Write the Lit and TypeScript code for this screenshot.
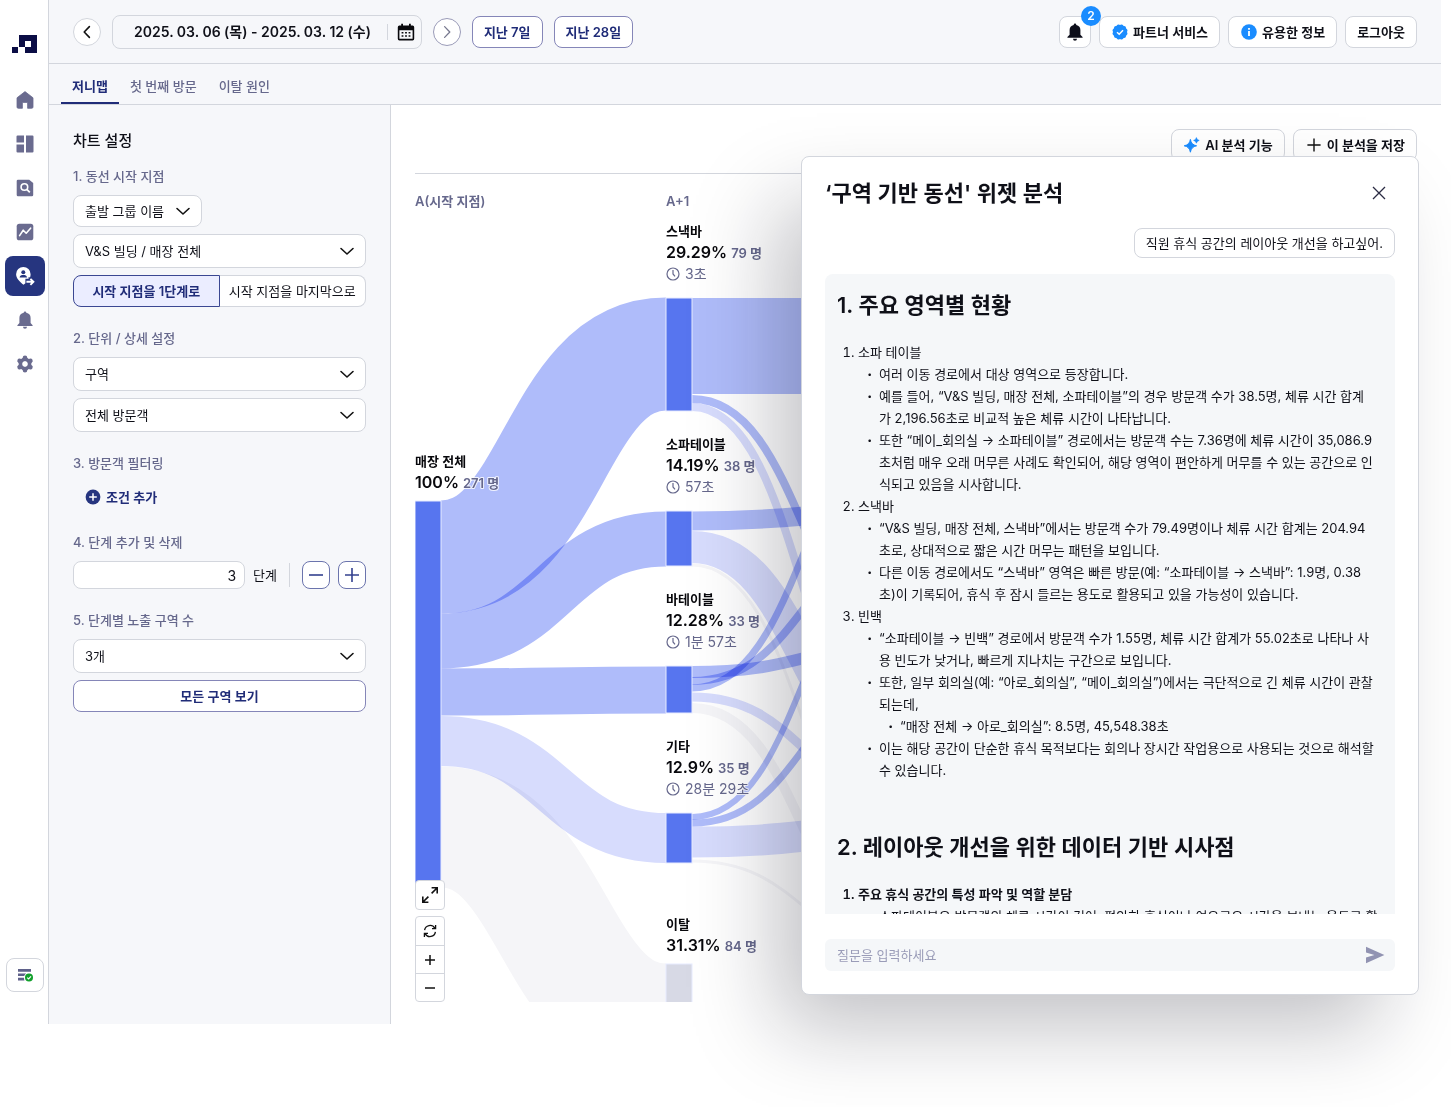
import { LitElement, html, svg, css } from "lit";
import { customElement, state } from "lit/decorators.js";
import { classMap } from "lit/directives/class-map.js";

interface FlowNode {
  name: string;
  share: string;
  count: string;
  time?: string;
  x: number;
  y: number;
  height: number;
  exit?: boolean;
}

interface FlowLink {
  from: number;
  start: number;
  end: number;
  width: number;
  tone: "strong" | "soft" | "exit";
}

const NODE_WIDTH = 26;
const COLUMNS = [415, 666, 917];

const NODES: FlowNode[] = [
  { name: "매장 전체", share: "100%", count: "271 명", x: 415, y: 501, height: 387 },
  { name: "스낵바", share: "29.29%", count: "79 명", time: "3초", x: 666, y: 298, height: 113 },
  { name: "소파테이블", share: "14.19%", count: "38 명", time: "57초", x: 666, y: 511, height: 55 },
  { name: "바테이블", share: "12.28%", count: "33 명", time: "1분 57초", x: 666, y: 666, height: 47 },
  { name: "기타", share: "12.9%", count: "35 명", time: "28분 29초", x: 666, y: 813, height: 50 },
  { name: "이탈", share: "31.31%", count: "84 명", x: 666, y: 964, height: 121, exit: true },
];

/* start and end are the vertical centres of the ribbon at both columns */
const LINKS: FlowLink[] = [
  { from: 0, start: 827, end: 1024, width: 121, tone: "exit" },
  { from: 0, start: 557, end: 354, width: 113, tone: "strong" },
  { from: 0, start: 641, end: 539, width: 55, tone: "strong" },
  { from: 0, start: 692, end: 690, width: 47, tone: "strong" },
  { from: 0, start: 741, end: 838, width: 50, tone: "soft" },
  { from: 1, start: 346, end: 346, width: 96, tone: "strong" },
  { from: 1, start: 399, end: 657, width: 8, tone: "strong" },
  { from: 1, start: 407, end: 775, width: 8, tone: "soft" },
  { from: 1, start: 521, end: 511, width: 19, tone: "strong" },
  { from: 1, start: 547, end: 767, width: 32, tone: "soft" },
  { from: 1, start: 565, end: 885, width: 3, tone: "exit" },
  { from: 1, start: 672, end: 644, width: 12, tone: "strong" },
  { from: 1, start: 681, end: 535, width: 8, tone: "strong" },
  { from: 1, start: 688, end: 415, width: 7, tone: "strong" },
  { from: 1, start: 697, end: 801, width: 9, tone: "soft" },
  { from: 1, start: 708, end: 952, width: 10, tone: "exit" },
  { from: 1, start: 817, end: 542, width: 6, tone: "strong" },
  { from: 1, start: 823, end: 672, width: 7, tone: "strong" },
  { from: 1, start: 842, end: 830, width: 31, tone: "soft" },
  { from: 1, start: 861, end: 953, width: 3, tone: "exit" },
];

const chevron = html`<svg class="chev" width="16" height="16" viewBox="0 0 16 16" aria-hidden="true">
  <path d="M2 5.5 L8 11 L14 5.5" fill="none" stroke="#111" stroke-width="1.6" stroke-linecap="round" stroke-linejoin="round" />
</svg>`;

const tokens = css`
  :host {
    --ink: #0f1018;
    --muted: #66688c;
    --navy: #202c78;
    --line: #d3d6dd;
    --pale: #f6f7fa;
    --blue: #1a8cff;
    display: block;
    box-sizing: border-box;
    font-family: Inter, "Noto Sans CJK KR", sans-serif;
    font-size: 13px;
    line-height: 20px;
    color: var(--ink);
  }
  *,
  *::before {
    box-sizing: border-box;
  }
  button,
  input,
  select {
    font: inherit;
    color: inherit;
    margin: 0;
  }
  button {
    cursor: pointer;
    white-space: nowrap;
  }
  svg {
    display: block;
    flex: none;
  }
`;

@customElement("side-rail")
export class SideRail extends LitElement {
  static styles = [
    tokens,
    css`
      :host {
        flex: none;
        width: 49px;
        border-right: 1px solid var(--line);
        background: #fff;
      }
      .rail {
        display: flex;
        flex-direction: column;
        align-items: center;
        height: 100%;
        padding: 35px 0 32px 1px;
      }
      .menu {
        display: flex;
        flex-direction: column;
        gap: 4px;
        margin-top: 27px;
      }
      .item {
        display: grid;
        place-items: center;
        width: 40px;
        height: 40px;
        border-radius: 8px;
        color: #6a6b8f;
      }
      .item.on {
        background: #26357f;
        color: #fff;
      }
      .status {
        display: grid;
        place-items: center;
        width: 38px;
        height: 34px;
        margin-top: auto;
        padding: 0;
        border: 1px solid var(--line);
        border-radius: 8px;
        background: #fff;
      }
    `,
  ];

  private icons = [
    { label: "홈", art: svg`<path d="M10 1.6 L18 7.8 V17 a1.3 1.3 0 0 1-1.3 1.3 H12.6 V12.4 H7.4 V18.3 H3.3 A1.3 1.3 0 0 1 2 17 V7.8 Z" fill="currentColor" stroke="currentColor" stroke-width=".8" stroke-linejoin="round"/>` },
    { label: "대시보드", art: svg`<path d="M2.6 1.5H9V8.6H1.5V2.6A1.1 1.1 0 0 1 2.6 1.5ZM1.5 10.4H9V18.5H2.6A1.1 1.1 0 0 1 1.5 17.4ZM11 1.5H17.4A1.1 1.1 0 0 1 18.5 2.6V17.4A1.1 1.1 0 0 1 17.4 18.5H11Z" fill="currentColor"/>` },
    { label: "탐색", art: svg`<path d="M3 1.8H14.2L18.2 5V17A1.3 1.3 0 0 1 16.9 18.3H3A1.3 1.3 0 0 1 1.7 17V3.1A1.3 1.3 0 0 1 3 1.8Z" fill="currentColor"/><circle cx="9.4" cy="9" r="3.3" fill="none" stroke="#fff" stroke-width="1.6"/><path d="M11.8 11.4 L14.8 14.4" stroke="#fff" stroke-width="1.8"/>` },
    { label: "추이", art: svg`<rect x="1.7" y="1.7" width="16.6" height="16.6" rx="2.6" fill="currentColor"/><path d="M4.6 13.6 L8.2 8.2 L11.2 11.2 L15.6 6.2" fill="none" stroke="#fff" stroke-width="1.6" stroke-linecap="round" stroke-linejoin="round"/>` },
    { label: "동선", on: true, art: svg`<path d="M8.3 1 A7.2 7.2 0 0 0 1.1 8.2 C1.1 12.6 5 15.8 8.5 18.8 L10.4 17.2 V12.8 H13.6 V11 L15 11.4 C15.4 10.4 15.6 9.3 15.6 8.2 A7.2 7.2 0 0 0 8.3 1Z" fill="currentColor"/><circle cx="8.3" cy="6.2" r="2" fill="#26357f"/><path d="M4.6 11.4 C4.8 9.6 6.4 9 8.3 9 S11.8 9.6 12 11.4Z" fill="#26357f"/><path d="M11.4 15.8 H18 M15.4 12.8 L18.4 15.8 L15.4 18.8" fill="none" stroke="currentColor" stroke-width="1.9"/>` },
    { label: "알림", art: svg`<path d="M10 1.4 a1.3 1.3 0 0 1 1.3 1.3 A5.4 5.4 0 0 1 15.6 8 V13 L17.6 15.2 V16 H2.4 V15.2 L4.4 13 V8 A5.4 5.4 0 0 1 8.7 2.7 A1.3 1.3 0 0 1 10 1.4Z M8 16.8 H12 A2 2 0 0 1 8 16.8Z" fill="currentColor"/>` },
    { label: "설정", art: svg`<circle cx="10" cy="10" r="4.4" fill="none" stroke="currentColor" stroke-width="4"/><g stroke="currentColor" stroke-width="4.6" stroke-linecap="round"><path d="M10 4V3.8M10 16V16.2M4.8 7L4.6 6.9M15.2 13L15.4 13.1M4.8 13L4.6 13.1M15.2 7L15.4 6.9"/></g><circle cx="10" cy="10" r="2.7" fill="#fff"/>` },
  ];

  render() {
    return html`<nav class="rail" aria-label="주 메뉴">
      <svg width="25" height="18" viewBox="0 0 25 18" aria-hidden="true">
        <path d="M7 0H25V18H13V12H7ZM13 6V12H19V6ZM0 12H6V18H0Z" fill="#0b0d45" fill-rule="evenodd" />
      </svg>
      <div class="menu">
        ${this.icons.map(
          (i) => html`<a class=${classMap({ item: true, on: !!i.on })} href="#" aria-label=${i.label}>
            <svg width="20" height="20" viewBox="0 0 20 20">${i.art}</svg>
          </a>`
        )}
      </div>
      <button class="status" aria-label="상태">
        <svg width="18" height="16" viewBox="0 0 18 16">
          <path d="M2 2H15V4.8H2ZM2 6.4H10V9H2ZM2 10.8H8.4V13.4H2Z" fill="#5f618a" />
          <circle cx="13" cy="10.6" r="5" fill="#fff" />
          <circle cx="13" cy="10.6" r="4" fill="#12a02c" />
          <path d="M11.2 10.6 L12.6 12 L15 9.4" fill="none" stroke="#fff" stroke-width="1.2" />
        </svg>
      </button>
    </nav>`;
  }
}

@customElement("top-bar")
export class TopBar extends LitElement {
  static styles = [
    tokens,
    css`
      .bar {
        display: flex;
        align-items: center;
        justify-content: space-between;
        height: 64px;
        padding: 0 24px;
        border-bottom: 1px solid var(--line);
        background: var(--pale);
      }
      .period {
        display: flex;
        align-items: center;
        gap: 11px;
      }
      .round {
        display: grid;
        place-items: center;
        width: 28px;
        height: 28px;
        padding: 0;
        border: 1px solid var(--line);
        border-radius: 50%;
        background: #fff;
      }
      .round.next {
        border-color: #9a9bb8;
      }
      .range {
        display: flex;
        align-items: center;
        height: 34px;
        padding: 0 6px 0 21px;
        border: 1px solid var(--line);
        border-radius: 8px;
        background: var(--pale);
        font-size: 14px;
        font-weight: 600;
      }
      .cal {
        display: flex;
        align-items: center;
        height: 16px;
        margin-left: 16px;
        padding-left: 9px;
        border-left: 1px solid var(--line);
      }
      .btn {
        display: flex;
        align-items: center;
        gap: 4px;
        height: 32px;
        padding: 0 11px;
        border: 1px solid var(--line);
        border-radius: 8px;
        background: #fff;
        font-weight: 600;
      }
      .btn.quick {
        border-color: #8586b8;
        color: var(--navy);
      }
      .tools {
        display: flex;
        align-items: center;
        gap: 8px;
      }
      .bell {
        position: relative;
        padding: 0 6px;
      }
      .badge {
        position: absolute;
        top: -11px;
        right: -11px;
        width: 20px;
        height: 20px;
        border-radius: 50%;
        background: var(--blue);
        color: #fff;
        font-size: 12px;
        text-align: center;
      }
    `,
  ];

  render() {
    return html`<header class="bar">
      <div class="period">
        <button class="round" aria-label="이전 기간">
          <svg width="16" height="16" viewBox="0 0 16 16"><path d="M10.4 2.6 L5.2 8 L10.4 13.4" fill="none" stroke="#111" stroke-width="1.6" stroke-linecap="round" stroke-linejoin="round" /></svg>
        </button>
        <button class="range">
          2025. 03. 06 (목) - 2025. 03. 12 (수)
          <span class="cal">
            <svg width="18" height="18" viewBox="0 0 18 18">
              <path d="M4.2 .8H6V2.6H12V.8H13.8V2.6H15.6A1.6 1.6 0 0 1 17.2 4.2V15.8A1.6 1.6 0 0 1 15.6 17.4H2.4A1.6 1.6 0 0 1 .8 15.8V4.2A1.6 1.6 0 0 1 2.4 2.6H4.2ZM2.4 7.2V15.8H15.6V7.2ZM4.6 9H6.4V10.6H4.6ZM8.1 9H9.9V10.6H8.1ZM11.6 9H13.4V10.6H11.6ZM4.6 12.2H6.4V13.8H4.6ZM8.1 12.2H9.9V13.8H8.1ZM11.6 12.2H13.4V13.8H11.6Z" fill="#08080c" fill-rule="evenodd" />
            </svg>
          </span>
        </button>
        <button class="round next" aria-label="다음 기간">
          <svg width="16" height="16" viewBox="0 0 16 16"><path d="M5.6 2.6 L10.8 8 L5.6 13.4" fill="none" stroke="#77788f" stroke-width="1.3" stroke-linecap="round" stroke-linejoin="round" /></svg>
        </button>
        <button class="btn quick">지난 7일</button>
        <button class="btn quick">지난 28일</button>
      </div>
      <div class="tools">
        <button class="btn bell" aria-label="알림 2건">
          <svg width="18" height="18" viewBox="0 0 18 18"><path d="M9 .6 a1.3 1.3 0 0 1 1.3 1.3 A5.2 5.2 0 0 1 14.4 7 V11.8 L16.6 14 V14.8 H1.4 V14 L3.6 11.8 V7 A5.2 5.2 0 0 1 7.7 1.9 A1.3 1.3 0 0 1 9 .6Z M7 15.8 H11 A2 2 0 0 1 7 15.8Z" fill="#0d0e1a" /></svg>
          <span class="badge">2</span>
        </button>
        <button class="btn">
          <svg width="18" height="18" viewBox="0 0 18 18">
            <g fill="#1a8cff"><circle cx="9" cy="9" r="7" /><rect x="3" y="3" width="12" height="12" rx="2" /><rect x="3" y="3" width="12" height="12" rx="2" transform="rotate(30 9 9)" /><rect x="3" y="3" width="12" height="12" rx="2" transform="rotate(60 9 9)" /></g>
            <path d="M6 9.2 L8.2 11.2 L12 7.2" fill="none" stroke="#fff" stroke-width="1.5" />
          </svg>
          파트너 서비스
        </button>
        <button class="btn">
          <svg width="18" height="18" viewBox="0 0 18 18">
            <circle cx="9" cy="9" r="7.8" fill="#1a8cff" />
            <path d="M8.1 8H9.9V13H8.1ZM8.1 5H9.9V6.7H8.1Z" fill="#fff" />
          </svg>
          유용한 정보
        </button>
        <button class="btn">로그아웃</button>
      </div>
    </header>`;
  }
}

@customElement("chart-settings")
export class ChartSettings extends LitElement {
  @state() private steps = 3;

  static styles = [
    tokens,
    css`
      :host {
        flex: none;
        width: 342px;
        padding: 24px;
        border-right: 1px solid var(--line);
        background: var(--pale);
      }
      .title {
        margin: 0 0 13px;
        font-size: 15px;
        line-height: 24px;
        font-weight: 500;
      }
      .form {
        display: flex;
        flex-direction: column;
        gap: 21px;
      }
      .group {
        display: flex;
        flex-direction: column;
        align-items: stretch;
        gap: 7px;
        min-width: 0;
      }
      .label {
        margin: 0 0 2px;
        font-size: 13px;
        font-weight: 500;
        color: var(--muted);
      }
      .pick {
        display: grid;
        align-items: center;
      }
      .pick > * {
        grid-area: 1 / 1;
      }
      .pick .chev {
        justify-self: end;
        margin-right: 11px;
        pointer-events: none;
      }
      .pick.small {
        align-self: flex-start;
      }
      select {
        width: 100%;
        height: 34px;
        padding: 0 36px 0 11px;
        border: 1px solid var(--line);
        border-radius: 8px;
        background: #fff;
        appearance: none;
      }
      .small select {
        height: 32px;
      }
      .toggle {
        display: grid;
        grid-template-columns: 1fr 1fr;
      }
      .seg {
        height: 32px;
        padding: 0;
        border: 1px solid var(--line);
        border-left: 0;
        border-radius: 0 8px 8px 0;
        background: #fff;
      }
      .seg.on {
        border: 1px solid #3b4792;
        border-radius: 8px 0 0 8px;
        background: #ebedff;
        color: var(--navy);
        font-weight: 600;
      }
      .add {
        display: flex;
        align-items: center;
        align-self: flex-start;
        gap: 5px;
        height: 29px;
        padding: 0 12px;
        border: 0;
        background: none;
        color: var(--navy);
        font-weight: 600;
      }
      .steps {
        display: flex;
        align-items: center;
        gap: 8px;
      }
      .count {
        flex: 1;
        min-width: 0;
        height: 28px;
        padding: 0 8px;
        border: 1px solid var(--line);
        border-radius: 8px;
        background: #fff;
        font-size: 14px;
        text-align: right;
      }
      .rule {
        width: 1px;
        height: 24px;
        margin: 0 4px;
        background: var(--line);
      }
      .step {
        display: grid;
        place-items: center;
        width: 28px;
        height: 28px;
        padding: 0;
        border: 1px solid #6b74ad;
        border-radius: 8px;
        background: #fff;
      }
      .all {
        height: 32px;
        border: 1px solid #8586b8;
        border-radius: 8px;
        background: #fff;
        color: var(--navy);
        font-weight: 600;
      }
    `,
  ];

  private picker(label: string, value: string, small = false) {
    return html`<div class=${classMap({ pick: true, small })}>
      <select aria-label=${label}><option>${value}</option></select>
      ${chevron}
    </div>`;
  }

  private move(by: number) {
    this.steps = Math.max(1, this.steps + by);
  }

  render() {
    return html`<h2 class="title">차트 설정</h2>
      <div class="form">
        <section class="group">
          <h3 class="label">1. 동선 시작 지점</h3>
          ${this.picker("출발 그룹", "출발 그룹 이름", true)} ${this.picker("시작 지점", "V&S 빌딩 / 매장 전체")}
          <div class="toggle">
            <button class="seg on" aria-pressed="true">시작 지점을 1단계로</button>
            <button class="seg" aria-pressed="false">시작 지점을 마지막으로</button>
          </div>
        </section>
        <section class="group">
          <h3 class="label">2. 단위 / 상세 설정</h3>
          ${this.picker("단위", "구역")} ${this.picker("방문객", "전체 방문객")}
        </section>
        <section class="group">
          <h3 class="label">3. 방문객 필터링</h3>
          <button class="add">
            <svg width="16" height="16" viewBox="0 0 16 16"><circle cx="8" cy="8" r="7.4" fill="#26357f" /><path d="M8 4.2V11.8M4.2 8H11.8" stroke="#fff" stroke-width="1.5" /></svg>
            조건 추가
          </button>
        </section>
        <section class="group">
          <label class="label" for="steps">4. 단계 추가 및 삭제</label>
          <div class="steps">
            <input class="count" id="steps" type="text" inputmode="numeric" .value=${String(this.steps)} />
            <span>단계</span>
            <span class="rule"></span>
            <button class="step" aria-label="단계 삭제" @click=${() => this.move(-1)}>
              <svg width="16" height="16" viewBox="0 0 16 16"><path d="M1 8H15" stroke="#34418f" stroke-width="1.6" /></svg>
            </button>
            <button class="step" aria-label="단계 추가" @click=${() => this.move(1)}>
              <svg width="16" height="16" viewBox="0 0 16 16"><path d="M1 8H15M8 1V15" stroke="#34418f" stroke-width="1.6" /></svg>
            </button>
          </div>
        </section>
        <section class="group">
          <h3 class="label">5. 단계별 노출 구역 수</h3>
          ${this.picker("노출 구역 수", "3개")}
          <button class="all">모든 구역 보기</button>
        </section>
      </div>`;
  }
}

@customElement("journey-chart")
export class JourneyChart extends LitElement {
  static styles = [
    tokens,
    css`
      :host {
        flex: 1;
        min-width: 0;
        padding: 24px 24px 22px;
        background: #fff;
      }
      .actions {
        display: flex;
        justify-content: flex-end;
        gap: 8px;
        margin-bottom: 12px;
      }
      .btn {
        display: flex;
        align-items: center;
        gap: 4px;
        height: 32px;
        padding: 0 11px;
        border: 1px solid var(--line);
        border-radius: 8px;
        background: #fff;
        font-weight: 600;
      }
      .canvas {
        position: relative;
        overflow: hidden;
        border-top: 1px solid var(--line);
      }
      .flow {
        fill: none;
        mix-blend-mode: multiply;
      }
      .strong {
        stroke: #afbcfa;
      }
      .soft {
        stroke: #d7dcfd;
      }
      .exit {
        stroke: #f5f5f8;
      }
      .node {
        fill: #5775ef;
        stroke: #e8ecff;
        stroke-width: 1;
      }
      .node.gone {
        fill: #d7d9e5;
      }
      text {
        paint-order: stroke;
        stroke: #fff;
        stroke-opacity: 0.8;
        stroke-width: 2px;
        stroke-linejoin: round;
      }
      .head,
      .people {
        fill: var(--muted);
        font-size: 13px;
        font-weight: 600;
      }
      .name {
        fill: #08080c;
        font-size: 13px;
        font-weight: 600;
      }
      .share {
        fill: #08080c;
        font-size: 16px;
        font-weight: 600;
      }
      .time {
        fill: var(--muted);
        font-size: 14px;
      }
      .clock {
        fill: none;
        stroke: var(--muted);
        stroke-width: 1.2;
      }
      .zoom {
        position: absolute;
        left: 0;
        bottom: 0;
        display: flex;
        flex-direction: column;
        gap: 6px;
      }
      .stack {
        display: flex;
        flex-direction: column;
        border: 1px solid var(--line);
        border-radius: 4px;
        background: #fff;
      }
      .tool {
        display: grid;
        place-items: center;
        width: 28px;
        height: 28px;
        padding: 0;
        border: 0;
        border-radius: 4px;
        background: none;
      }
      .tool + .tool {
        border-top: 1px solid var(--line);
        border-radius: 0;
      }
    `,
  ];

  private link(l: FlowLink) {
    const x0 = COLUMNS[l.from] + NODE_WIDTH;
    const x1 = COLUMNS[l.from + 1];
    const mid = (x0 + x1) / 2;
    return svg`<path class="flow ${l.tone}" stroke-width=${l.width}
      d="M${x0} ${l.start} C${mid} ${l.start} ${mid} ${l.end} ${x1} ${l.end}" />`;
  }

  private node(n: FlowNode) {
    return svg`<rect class=${n.exit ? "node gone" : "node"} x=${n.x} y=${n.y} width=${NODE_WIDTH} height=${n.height} />`;
  }

  private caption(n: FlowNode) {
    const base = n.y - (n.time ? 40 : 13);
    return svg`
      <text class="name" x=${n.x} y=${base - 22}>${n.name}</text>
      <text x=${n.x} y=${base}><tspan class="share">${n.share}</tspan><tspan class="people" dx="4">${n.count}</tspan></text>
      ${
        n.time
          ? svg`<g class="clock"><circle cx=${n.x + 7} cy=${base + 16} r="6" />
              <path d="M${n.x + 7} ${base + 12} v4 l2 2.4" /></g>
            <text class="time" x=${n.x + 19} y=${base + 21}>${n.time}</text>`
          : null
      }`;
  }

  render() {
    return html`<div class="actions">
        <button class="btn">
          <svg width="18" height="18" viewBox="0 0 18 18">
            <path d="M7.4 3.4 Q8.2 8.8 13.6 9.8 Q8.2 10.8 7.4 16.2 Q6.6 10.8 1.2 9.8 Q6.6 8.8 7.4 3.4Z" fill="#1a8cff" stroke="#1a8cff" stroke-linejoin="round" />
            <path d="M13.4 1.6 Q13.8 4 16.2 4.4 Q13.8 4.8 13.4 7.2 Q13 4.8 10.6 4.4 Q13 4 13.4 1.6Z" fill="#1a8cff" stroke="#1a8cff" stroke-width=".6" />
          </svg>
          AI 분석 기능
        </button>
        <button class="btn">
          <svg width="18" height="18" viewBox="0 0 18 18"><path d="M9 2.4V15.6M2.4 9H15.6" stroke="#111" stroke-width="1.4" /></svg>
          이 분석을 저장
        </button>
      </div>
      <div class="canvas">
        <svg width="1002" height="828" viewBox="415 174 1002 828" role="img" aria-label="동선 흐름">
          ${LINKS.map((l) => this.link(l))} ${NODES.map((n) => this.node(n))}
          <text class="head" x="415" y="206">A(시작 지점)</text>
          <text class="head" x="666" y="206">A+1</text>
          ${NODES.map((n) => this.caption(n))}
        </svg>
        <div class="zoom">
          <div class="stack">
            <button class="tool" aria-label="전체 화면">
              <svg width="20" height="20" viewBox="0 0 20 20"><path d="M11.6 8.4 L17 3 M11.6 2.8 H17.2 V8.4 M8.4 11.6 L3 17 M2.8 11.6 V17.2 H8.4" fill="none" stroke="#111" stroke-width="1.6" /></svg>
            </button>
          </div>
          <div class="stack">
            <button class="tool" aria-label="초기화">
              <svg width="16" height="16" viewBox="0 0 16 16"><path d="M2.6 7.2 A5.5 5.5 0 0 1 12.8 5.2 M13.4 8.8 A5.5 5.5 0 0 1 3.2 10.8 M13.6 2 V5.6 H10 M2.4 14 V10.4 H6" fill="none" stroke="#111" stroke-width="1.3" /></svg>
            </button>
            <button class="tool" aria-label="확대">
              <svg width="16" height="16" viewBox="0 0 16 16"><path d="M8 3V13M3 8H13" stroke="#111" stroke-width="1.5" /></svg>
            </button>
            <button class="tool" aria-label="축소">
              <svg width="16" height="16" viewBox="0 0 16 16"><path d="M3 8H13" stroke="#111" stroke-width="1.5" /></svg>
            </button>
          </div>
        </div>
      </div>`;
  }
}

@customElement("analysis-panel")
export class AnalysisPanel extends LitElement {
  static styles = [
    tokens,
    css`
      :host {
        padding: 16px 23px 23px;
        border: 1px solid var(--line);
        border-radius: 8px;
        background: #fff;
        box-shadow: -32px 40px 80px -8px rgba(16, 16, 32, 0.26);
      }
      .top {
        display: flex;
        align-items: center;
        justify-content: space-between;
      }
      .title {
        margin: 0;
        font-size: 22px;
        line-height: 40px;
        font-weight: 600;
      }
      .close {
        display: grid;
        place-items: center;
        width: 32px;
        height: 32px;
        padding: 0;
        border: 0;
        background: none;
      }
      .asked {
        display: flex;
        justify-content: flex-end;
        margin: 15px 0 16px;
      }
      .bubble {
        margin: 0;
        padding: 4px 11px;
        border: 1px solid var(--line);
        border-radius: 8px;
      }
      .answer {
        height: 640px;
        padding: 15px 20px 15px 12px;
        border-radius: 8px 8px 0 0;
        background: #f5f7f9;
        overflow: hidden;
        line-height: 22px;
      }
      .part {
        margin: 0 0 20px;
        font-size: 22px;
        line-height: 32px;
        font-weight: 600;
      }
      ol {
        margin: 0 0 50px;
        padding-left: 21px;
      }
      ul {
        margin: 0;
        padding-left: 21px;
        font-weight: 400;
        list-style-type: "·\\00a0\\00a0";
      }
      ul > li::marker {
        font-weight: 900;
      }
      .strong {
        font-weight: 600;
        white-space: nowrap;
      }
      .ask {
        display: flex;
        align-items: center;
        height: 32px;
        margin-top: 25px;
        padding: 0 8px 0 12px;
        border-radius: 6px;
        background: #f5f7f9;
      }
      .ask input {
        flex: 1;
        min-width: 0;
        padding: 0;
        border: 0;
        outline: 0;
        background: none;
      }
      .ask input::placeholder {
        color: #9a9cb8;
      }
      .send {
        display: grid;
        place-items: center;
        width: 24px;
        height: 24px;
        padding: 0;
        border: 0;
        background: none;
      }
    `,
  ];

  render() {
    return html`<div class="top">
        <h2 class="title">‘구역 기반 동선' 위젯 분석</h2>
        <button class="close" aria-label="닫기">
          <svg width="16" height="16" viewBox="0 0 16 16"><path d="M2 2L14 14M14 2L2 14" stroke="#2b2c44" stroke-width="1.3" /></svg>
        </button>
      </div>
      <div class="asked"><p class="bubble">직원 휴식 공간의 레이아웃 개선을 하고싶어.</p></div>
      <article class="answer">
        <h3 class="part">1. 주요 영역별 현황</h3>
        <ol>
          <li>
            소파 테이블
            <ul>
              <li>여러 이동 경로에서 대상 영역으로 등장합니다.</li>
              <li>예를 들어, “V&S 빌딩, 매장 전체, 소파테이블”의 경우 방문객 수가 38.5명, 체류 시간 합계가 2,196.56초로 비교적 높은 체류 시간이 나타납니다.</li>
              <li>또한 “메이_회의실 → 소파테이블” 경로에서는 방문객 수는 7.36명에 체류 시간이 35,086.9초처럼 매우 오래 머무른 사례도 확인되어, 해당 영역이 편안하게 머무를 수 있는 공간으로 인식되고 있음을 시사합니다.</li>
            </ul>
          </li>
          <li>
            스낵바
            <ul>
              <li>“V&S 빌딩, 매장 전체, 스낵바”에서는 방문객 수가 79.49명이나 체류 시간 합계는 204.94초로, 상대적으로 짧은 시간 머무는 패턴을 보입니다.</li>
              <li>다른 이동 경로에서도 “스낵바” 영역은 빠른 방문(예: “소파테이블 → 스낵바”: 1.9명, 0.38초)이 기록되어, 휴식 후 잠시 들르는 용도로 활용되고 있을 가능성이 있습니다.</li>
            </ul>
          </li>
          <li>
            빈백
            <ul>
              <li>“소파테이블 → 빈백” 경로에서 방문객 수가 1.55명, 체류 시간 합계가 55.02초로 나타나 사용 빈도가 낮거나, 빠르게 지나치는 구간으로 보입니다.</li>
              <li>
                또한, 일부 회의실(예: “아로_회의실”, “메이_회의실”)에서는 극단적으로 긴 체류 시간이 관찰되는데,
                <ul>
                  <li>“매장 전체 → 아로_회의실”: 8.5명, 45,548.38초</li>
                </ul>
              </li>
              <li>이는 해당 공간이 단순한 휴식 목적보다는 회의나 장시간 작업용으로 사용되는 것으로 해석할 수 있습니다.</li>
            </ul>
          </li>
        </ol>
        <h3 class="part">2. 레이아웃 개선을 위한 데이터 기반 시사점</h3>
        <ol>
          <li class="strong">
            주요 휴식 공간의 특성 파악 및 역할 분담
            <ul>
              <li>소파테이블은 방문객의 체류 시간이 길어, 편안한 휴식이나 여유로운 시간을 보내는 용도로 활</li>
            </ul>
          </li>
        </ol>
      </article>
      <div class="ask">
        <input type="text" aria-label="질문" placeholder="질문을 입력하세요" />
        <button class="send" aria-label="보내기">
          <svg width="20" height="18" viewBox="0 0 20 18"><path d="M1 .8 L19.4 9 L1 17.2 V11.4 L9.4 9 L1 6.6Z" fill="#9193b2" /></svg>
        </button>
      </div>`;
  }
}

@customElement("app-root")
export class AppRoot extends LitElement {
  static styles = [
    tokens,
    css`
      :host {
        position: relative;
        min-height: 100vh;
        padding-right: 10px;
        background: #fff;
        overflow: hidden;
      }
      .shell {
        display: flex;
      }
      .content {
        flex: 1;
        min-width: 0;
      }
      .tabs {
        display: flex;
        height: 41px;
        padding-left: 12px;
        border-bottom: 1px solid var(--line);
        background: var(--pale);
      }
      .tab {
        padding: 12px 11px 0;
        border-bottom: 2px solid transparent;
        color: var(--muted);
        font-weight: 500;
        text-decoration: none;
      }
      .tab.on {
        border-color: var(--navy);
        color: var(--navy);
        font-weight: 600;
      }
      .body {
        display: flex;
      }
      analysis-panel {
        position: absolute;
        top: 156px;
        right: 32px;
        width: 618px;
      }
    `,
  ];

  render() {
    return html`<div class="shell">
        <side-rail></side-rail>
        <div class="content">
          <top-bar></top-bar>
          <nav class="tabs" aria-label="분석 종류">
            <a class="tab on" href="#" aria-current="page">저니맵</a>
            <a class="tab" href="#">첫 번째 방문</a>
            <a class="tab" href="#">이탈 원인</a>
          </nav>
          <main class="body">
            <chart-settings></chart-settings>
            <journey-chart></journey-chart>
          </main>
        </div>
      </div>
      <analysis-panel></analysis-panel>`;
  }
}
